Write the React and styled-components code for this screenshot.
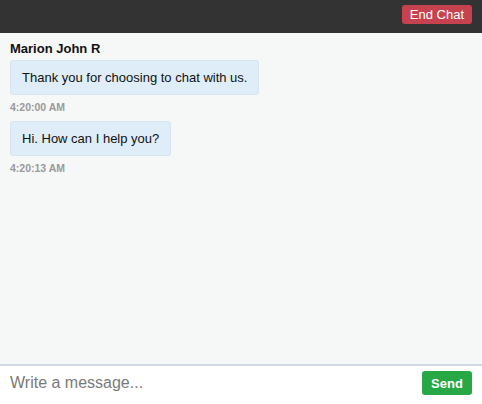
import React from 'react';
import styled, { createGlobalStyle } from 'styled-components';

const GlobalStyle = createGlobalStyle`
	html, body, #root {
		margin: 0;
		height: 100%;
	}
	body {
		font-family: "Liberation Sans", Arial, sans-serif;
	}
`;

const Page = styled.div`
	display: flex;
	flex-direction: column;
	height: 100%;
	background: #f6f7f7;
`;

const Header = styled.header`
	display: flex;
	justify-content: flex-end;
	align-items: flex-start;
	height: 33px;
	padding: 5px 10px 0;
	box-sizing: border-box;
	background: #333333;
`;

const EndButton = styled.button`
	height: 19px;
	padding: 0 8px;
	border: none;
	border-radius: 3px;
	background: #c7424f;
	color: #fff;
	font-family: inherit;
	font-size: 13px;
	line-height: 19px;
	cursor: pointer;
`;

const Messages = styled.main`
	flex: 1;
	padding: 8px 10px;
	display: flex;
	flex-direction: column;
	align-items: flex-start;
`;

const Sender = styled.div`
	font-size: 13px;
	font-weight: bold;
	color: #111;
	line-height: 15px;
	margin-bottom: 4px;
`;

const Bubble = styled.div`
	padding: 9px 11px;
	background: #deedf8;
	border: 1px solid #d5e5f1;
	border-radius: 3px;
	font-size: 13px;
	line-height: 15px;
	color: #111;
`;

const Time = styled.div`
	margin: 6px 0 8px;
	font-size: 10.5px;
	font-weight: bold;
	line-height: 12px;
	color: #9a9a9a;
`;

const Footer = styled.footer`
	display: flex;
	align-items: center;
	height: 40px;
	padding: 0 10px 4px;
	box-sizing: border-box;
	background: #fff;
	border-top: 2px solid #d3d9e3;
`;

const Input = styled.input`
	flex: 1;
	border: none;
	outline: none;
	background: transparent;
	font-family: inherit;
	font-size: 16px;
	color: #333;
	padding: 0;
	&::placeholder {
		color: #7a7a7a;
	}
`;

const SendButton = styled.button`
	width: 50px;
	height: 24px;
	border: none;
	border-radius: 3px;
	background: #28a745;
	color: #fff;
	font-family: inherit;
	font-size: 13px;
	font-weight: bold;
	cursor: pointer;
`;

const messages = [
	{ text: 'Thank you for choosing to chat with us.', time: '4:20:00 AM' },
	{ text: 'Hi. How can I help you?', time: '4:20:13 AM' }
];

const App = () => (
	<Page>
		<GlobalStyle />
		<Header>
			<EndButton>End Chat</EndButton>
		</Header>
		<Messages>
			<Sender>Marion John R</Sender>
			{messages.map(m => (
				<React.Fragment key={m.time}>
					<Bubble>{m.text}</Bubble>
					<Time>{m.time}</Time>
				</React.Fragment>
			))}
		</Messages>
		<Footer>
			<Input placeholder="Write a message..." />
			<SendButton>Send</SendButton>
		</Footer>
	</Page>
);

export default App;
